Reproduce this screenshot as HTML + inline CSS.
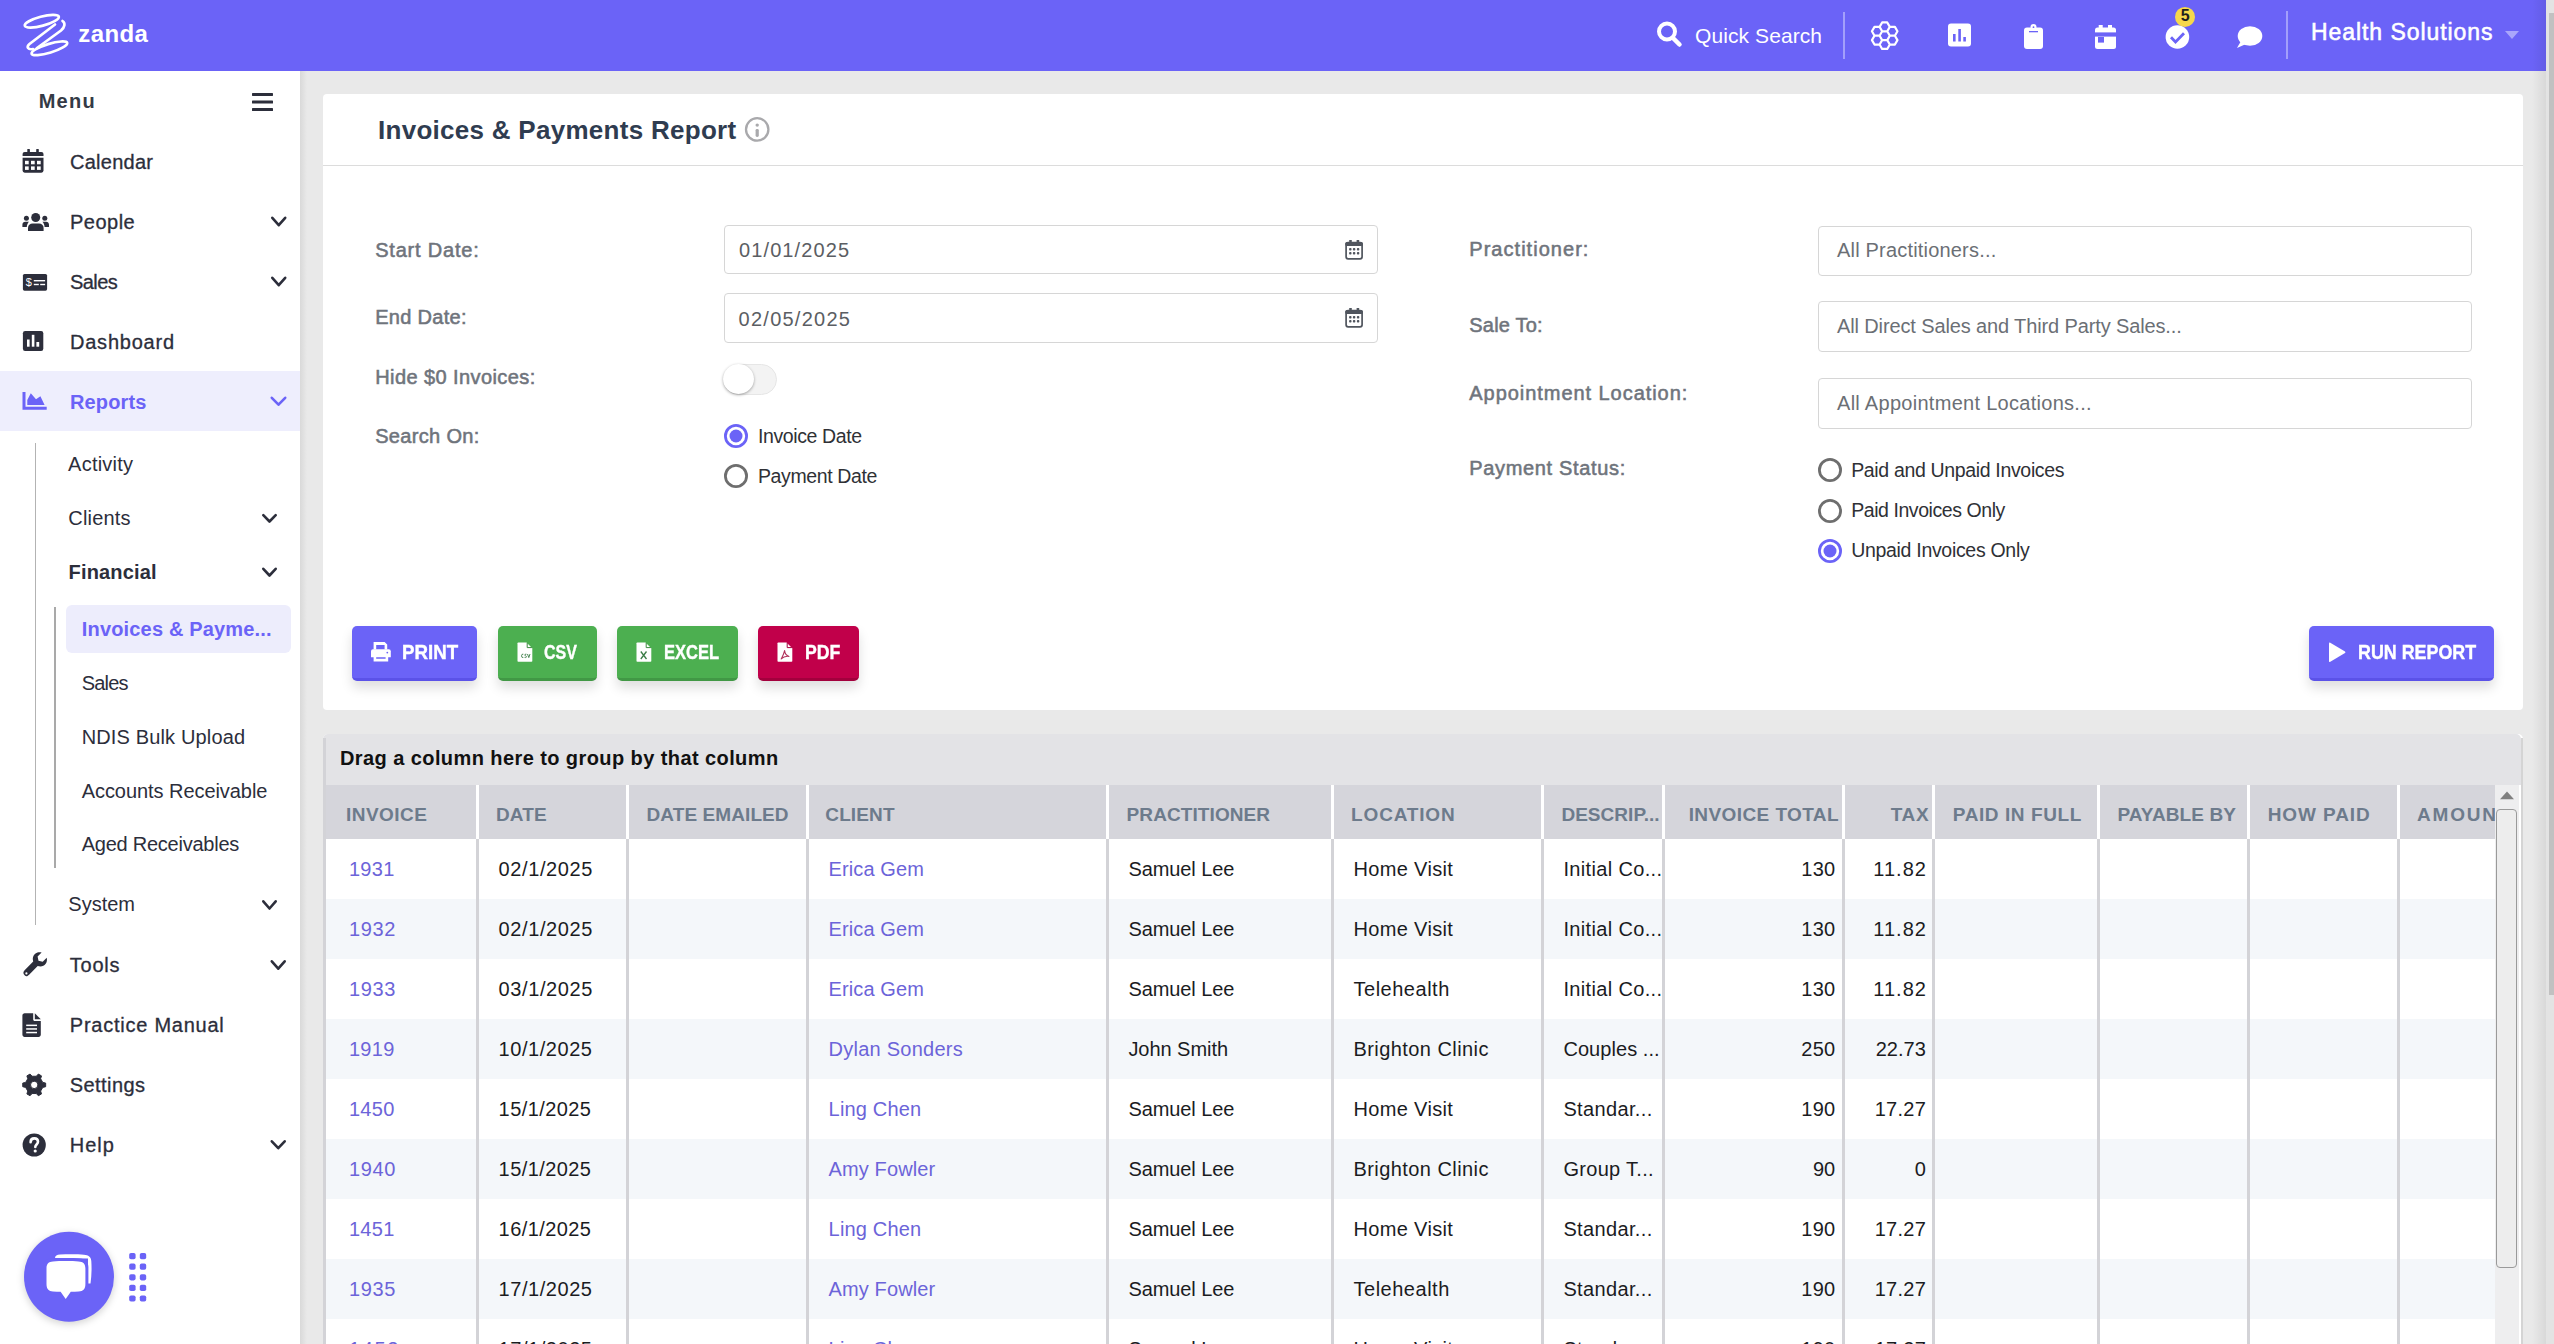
<!DOCTYPE html>
<html><head><meta charset="utf-8">
<style>

*{box-sizing:border-box;margin:0;padding:0}
html,body{width:2554px;height:1344px;overflow:hidden;background:#e9e9e9;font-family:"Liberation Sans",sans-serif}
.abs{position:absolute}
.t{position:absolute;white-space:nowrap;line-height:1}
#top{position:absolute;left:0;top:0;width:2546px;height:71px;background:#6b63f7}
#psb{position:absolute;left:2546px;top:0;width:8px;height:1344px;background:#e3e3e3}
#psb .th{position:absolute;left:3px;top:13px;width:5px;height:982px;background:#c1c1c1}
#side{position:absolute;left:0;top:71px;width:300px;height:1273px;background:#fff}
#sideshadow{position:absolute;left:300px;top:71px;width:7px;height:1273px;background:linear-gradient(to right,#d9d9d9,#e9e9e9)}
.si{font-size:20px;color:#2c2e3b}
.card{position:absolute;background:#fff;border-radius:4px}
.lbl{font-size:20px;color:#6f747c;font-weight:bold}
.inp{position:absolute;border:1px solid #d6d6d6;border-radius:4px;background:#fff}
.itx{font-size:20px;color:#5b5e63}
.rtx{font-size:19px;color:#34363b}
.radio{position:absolute;width:24px;height:24px;border-radius:50%;border:2.5px solid #6e6e6e;background:#fff}
.radio.on{border:2.5px solid #6b63f7}
.radio.on:after{content:"";position:absolute;left:4px;top:4px;width:11px;height:11px;border-radius:50%;background:#6b63f7}
.btn{position:absolute;height:55px;border-radius:5px;box-shadow:0 6px 10px rgba(0,0,0,.13)}
.btxt{font-size:20px;color:#fff;font-weight:bold}
.hd{font-size:19px;color:#6d7a8a;font-weight:bold}
.cell{font-size:20px;color:#1e1f22}
.lnk{font-size:20px;color:#6c64d9}
.sw{font-weight:normal !important;-webkit-text-stroke:0.55px currentColor}
.sw3{font-weight:normal !important;-webkit-text-stroke:0.3px currentColor}
.bt{-webkit-text-stroke:0.4px #fff}

</style></head><body>
<div id="top"></div>
<div id="psb"><div class="th"></div></div>
<!-- TOPBAR -->
<svg class="abs" style="left:0;top:0" width="2546" height="71" viewBox="0 0 2546 71">
 <g fill="none" stroke="#fff" stroke-width="2.7" stroke-linecap="round">
  <ellipse cx="41.8" cy="21.2" rx="17.6" ry="4.6" transform="rotate(-15 41.8 21.2)"/>
  <path d="M55 24.5 L29.5 44 C26 47 28 50 33 49 M62.5 21 C65.5 23 65 27 61 30.5 L37 48"/>
  <ellipse cx="49.4" cy="48.3" rx="18.6" ry="4.4" transform="rotate(-17 49.4 48.3)"/>
 </g>
 <!-- search -->
 <g fill="none" stroke="#fff">
  <circle cx="1667" cy="31.5" r="8" stroke-width="4"/>
  <path d="M1673 38 L1679.5 44.5" stroke-width="4.5" stroke-linecap="round"/>
 </g>
 <rect x="1843" y="12" width="2" height="47" fill="#a39ffb"/>
 <rect x="2286" y="11" width="2" height="48" fill="#a39ffb"/>
 <!-- honeycomb -->
 <g fill="none" stroke="#fff" stroke-width="2.2" id="hc"><path d="M1889.80 35.70 L1887.25 40.12 L1882.15 40.12 L1879.60 35.70 L1882.15 31.28 L1887.25 31.28Z M1897.45 31.28 L1894.90 35.70 L1889.80 35.70 L1887.25 31.28 L1889.80 26.87 L1894.90 26.87Z M1889.80 26.87 L1887.25 31.28 L1882.15 31.28 L1879.60 26.87 L1882.15 22.45 L1887.25 22.45Z M1882.15 31.28 L1879.60 35.70 L1874.50 35.70 L1871.95 31.28 L1874.50 26.87 L1879.60 26.87Z M1882.15 40.12 L1879.60 44.53 L1874.50 44.53 L1871.95 40.12 L1874.50 35.70 L1879.60 35.70Z M1889.80 44.53 L1887.25 48.95 L1882.15 48.95 L1879.60 44.53 L1882.15 40.12 L1887.25 40.12Z M1897.45 40.12 L1894.90 44.53 L1889.80 44.53 L1887.25 40.12 L1889.80 35.70 L1894.90 35.70Z" stroke-linejoin="round"/></g>
 <!-- chart -->
 <rect x="1948" y="23.5" width="23" height="23" rx="3" fill="#fff"/>
 <rect x="1953" y="34" width="2.6" height="7.5" fill="#6b63f7"/>
 <rect x="1958.3" y="29" width="2.6" height="12.5" fill="#6b63f7"/>
 <rect x="1963.3" y="37" width="2.6" height="4.5" fill="#6b63f7"/>
 <!-- clipboard -->
 <rect x="2024" y="27.5" width="19" height="21.5" rx="3" fill="#fff"/>
 <circle cx="2033.5" cy="27" r="3" fill="#fff"/>
 <rect x="2029" y="31" width="9" height="1.3" fill="#6b63f7"/>
 <circle cx="2033.5" cy="27.2" r="0.9" fill="#6b63f7"/>
 <!-- calendar -->
 <rect x="2095" y="27.5" width="21" height="21.5" rx="2.5" fill="#fff"/>
 <rect x="2095" y="32.4" width="21" height="4.2" fill="#6b63f7"/>
 <rect x="2098.7" y="25" width="4" height="4" fill="#fff"/>
 <rect x="2108" y="25" width="4" height="4" fill="#fff"/>
 <rect x="2098" y="37" width="6" height="5.6" fill="#6b63f7"/>
 <!-- check -->
 <circle cx="2177.4" cy="37" r="11.8" fill="#fff"/>
 <path d="M2171 37.3 L2175.5 42 L2184 33.2" fill="none" stroke="#6b63f7" stroke-width="2.8"/>
 <circle cx="2185" cy="16.9" r="10" fill="#f6d84c"/>
 <!-- chat -->
 <ellipse cx="2250" cy="36" rx="12.3" ry="9.8" fill="#fff"/>
 <path d="M2241 41 L2237 48 L2246 44 Z" fill="#fff"/>
 <!-- caret -->
 <path d="M2505 31 L2519 31 L2512 39 Z" fill="#aaa6fb"/>
</svg>
<div id="tx1" class="t " style="left:78.3px;top:22.18px;font-size:24px;letter-spacing:0.375px;font-weight:bold;color:#fff">zanda</div>
<div id="tx2" class="t " style="left:1695px;top:25.02px;font-size:21px;letter-spacing:0.091px;color:#fff">Quick Search</div>
<div class="t" style="left:2180.7px;top:8.4px;font-size:16px;font-weight:bold;color:#1e1e1e">5</div>
<div id="tx3" class="t sw" style="left:2311px;top:21.33px;font-size:23px;letter-spacing:0.933px;color:#fff">Health Solutions</div>
<div id="side"></div>
<div id="sideshadow"></div>
<div class="abs" style="left:0;top:371px;width:300px;height:60px;background:#eeeefd"></div>
<div class="abs" style="left:66px;top:605px;width:225px;height:48px;background:#ededfc;border-radius:6px"></div>
<div class="abs" style="left:34.8px;top:443px;width:1.5px;height:482px;background:#b3b3b3"></div>
<div class="abs" style="left:54.1px;top:607px;width:2px;height:261px;background:#a9a9a9"></div>
<svg class="abs" style="left:0;top:0" width="300" height="1344" viewBox="0 0 300 1344">
<rect x="252" y="92.9" width="21" height="3" rx="0.6" fill="#2c2e3b"/>
<rect x="252" y="100.5" width="21" height="3" rx="0.6" fill="#2c2e3b"/>
<rect x="252" y="108.0" width="21" height="3" rx="0.6" fill="#2c2e3b"/>
<rect x="27.3" y="149" width="2.6" height="4" rx="0.6" fill="#2c2e3b"/><rect x="36.2" y="149" width="2.6" height="4" rx="0.6" fill="#2c2e3b"/>
<path d="M22.6 154 Q22.6 151.9 24.7 151.9 L41.4 151.9 Q43.5 151.9 43.5 154 L43.5 156 L22.6 156 Z" fill="#2c2e3b"/>
<path d="M22.6 157.8 L43.5 157.8 L43.5 170.6 Q43.5 172.7 41.4 172.7 L24.7 172.7 Q22.6 172.7 22.6 170.6 Z" fill="#2c2e3b"/>
<rect x="25" y="160.8" width="3.7" height="3.5" fill="#fff"/>
<rect x="31" y="160.8" width="3.7" height="3.5" fill="#fff"/>
<rect x="37" y="160.8" width="3.7" height="3.5" fill="#fff"/>
<rect x="25" y="166.4" width="3.7" height="3.5" fill="#fff"/>
<rect x="31" y="166.4" width="3.7" height="3.5" fill="#fff"/>
<rect x="37" y="166.4" width="3.7" height="3.5" fill="#fff"/>
<circle cx="35.7" cy="217.5" r="4.5" fill="#2c2e3b"/>
<path d="M28 231 L28 228 C28 225.2 30 223.6 32.6 223.6 L39 223.6 C41.6 223.6 43.6 225.2 43.6 228 L43.6 231 Z" fill="#2c2e3b"/>
<circle cx="26.4" cy="218.2" r="2.5" fill="#2c2e3b"/><circle cx="44.8" cy="218.2" r="2.5" fill="#2c2e3b"/>
<path d="M22.4 227 L22.4 224.8 C22.4 222.8 23.6 221.8 25.3 221.8 L29 221.8 C27.6 223.2 26.9 225 26.8 227 Z" fill="#2c2e3b"/>
<path d="M49 227 L49 224.8 C49 222.8 47.8 221.8 46.1 221.8 L42.4 221.8 C43.8 223.2 44.5 225 44.6 227 Z" fill="#2c2e3b"/>
<rect x="22.9" y="274" width="24.2" height="16.7" rx="1.6" fill="#2c2e3b"/>
<text x="28.8" y="286.3" font-family="Liberation Sans" font-size="11" fill="#fff" text-anchor="middle">$</text>
<rect x="33.8" y="280" width="11.3" height="1.4" fill="#fff"/><rect x="33.8" y="283.8" width="5" height="1.4" fill="#fff"/><rect x="40.2" y="283.8" width="4.9" height="1.4" fill="#fff"/>
<rect x="22.9" y="331" width="20.4" height="20" rx="2.2" fill="#2c2e3b"/>
<rect x="27" y="339.5" width="2.6" height="7.2" fill="#fff"/><rect x="31.8" y="334.8" width="2.6" height="11.9" fill="#fff"/><rect x="36.4" y="342" width="2.8" height="4.7" fill="#fff"/>
<path d="M22.5 392 L25.5 392 L25.5 406.8 L46.7 406.8 L46.7 409.8 L22.5 409.8 Z" fill="#6b63f7"/>
<path d="M27.3 405 L27.3 400 L30.8 393.3 L36 399.3 L40.4 396.2 L44.6 405 Z" fill="#6b63f7"/>
<path d="M24.6 975.2 C23 973.6 23 971.8 24.6 970.2 L33.2 961.6 C32.2 958.2 33 955.5 35.5 953.6 C37.2 952.4 39.6 952 41.6 952.6 L37.6 956.6 L38.5 960.8 L42.7 961.7 L46.7 957.7 C47.3 959.7 46.9 962.1 45.7 963.8 C43.8 966.3 41.1 967.1 37.7 966.1 L29.1 974.7 C27.5 976.3 26.2 976.8 24.6 975.2 Z" fill="#2c2e3b"/>
<circle cx="26.4" cy="973.4" r="1.1" fill="#fff"/>
<path d="M22.4 1015.4 C22.4 1014.2 23.4 1013.2 24.6 1013.2 L33.2 1013.2 L33.2 1019.5 C33.2 1020.3 33.9 1021 34.7 1021 L40.8 1021 L40.8 1034.7 C40.8 1035.9 39.8 1036.9 38.6 1036.9 L24.6 1036.9 C23.4 1036.9 22.4 1035.9 22.4 1034.7 Z" fill="#2c2e3b"/>
<path d="M34.8 1013.2 L40.8 1019.3 L34.8 1019.3 Z" fill="#2c2e3b"/>
<rect x="26.2" y="1024.6" width="10.8" height="1.5" fill="#fff"/><rect x="26.2" y="1028.2" width="10.8" height="1.5" fill="#fff"/><rect x="26.2" y="1031.8" width="10.8" height="1.5" fill="#fff"/>
<path d="M42.75 1082.42 L45.66 1083.09 L45.66 1086.71 L42.75 1087.38 L40.62 1091.06 L41.50 1093.91 L38.36 1095.73 L36.32 1093.54 L32.08 1093.54 L30.04 1095.73 L26.90 1093.91 L27.78 1091.06 L25.65 1087.38 L22.74 1086.71 L22.74 1083.09 L25.65 1082.42 L27.78 1078.74 L26.90 1075.89 L30.04 1074.07 L32.08 1076.26 L36.32 1076.26 L38.36 1074.07 L41.50 1075.89 L40.62 1078.74Z M37.90 1084.90 A3.7 3.7 0 1 0 30.50 1084.90 A3.7 3.7 0 1 0 37.90 1084.90Z" fill="#2c2e3b" fill-rule="evenodd" stroke="#2c2e3b" stroke-width="1" stroke-linejoin="round"/>
<circle cx="34.2" cy="1145" r="11.6" fill="#2c2e3b"/>
<path d="M30.6 1142.2 C30.6 1139.8 32.2 1138.4 34.3 1138.4 C36.5 1138.4 38 1139.8 38 1141.8 C38 1144.4 35.3 1144.6 35.3 1147" fill="none" stroke="#fff" stroke-width="2.6" stroke-linecap="round"/>
<circle cx="35.2" cy="1151" r="1.6" fill="#fff"/>
<path d="M272.30 217.80 L278.75 225.20 L285.20 217.80" fill="none" stroke="#2c2e3b" stroke-width="2.6" stroke-linecap="round" stroke-linejoin="round"/>
<path d="M272.30 277.80 L278.75 285.20 L285.20 277.80" fill="none" stroke="#2c2e3b" stroke-width="2.6" stroke-linecap="round" stroke-linejoin="round"/>
<path d="M271.80 397.80 L278.50 404.70 L285.20 397.80" fill="none" stroke="#6b63f7" stroke-width="2.6" stroke-linecap="round" stroke-linejoin="round"/>
<path d="M263.30 515.10 L269.50 521.50 L275.70 515.10" fill="none" stroke="#2c2e3b" stroke-width="2.6" stroke-linecap="round" stroke-linejoin="round"/>
<path d="M263.30 568.80 L269.50 575.50 L275.70 568.80" fill="none" stroke="#2c2e3b" stroke-width="2.6" stroke-linecap="round" stroke-linejoin="round"/>
<path d="M263.30 901.30 L269.50 908.50 L275.70 901.30" fill="none" stroke="#2c2e3b" stroke-width="2.6" stroke-linecap="round" stroke-linejoin="round"/>
<path d="M271.80 961.30 L278.25 968.70 L284.70 961.30" fill="none" stroke="#2c2e3b" stroke-width="2.6" stroke-linecap="round" stroke-linejoin="round"/>
<path d="M271.80 1141.30 L278.25 1148.20 L284.70 1141.30" fill="none" stroke="#2c2e3b" stroke-width="2.6" stroke-linecap="round" stroke-linejoin="round"/>
<defs><filter id="shb" x="-30%" y="-30%" width="160%" height="160%"><feGaussianBlur stdDeviation="3.5"/></filter></defs>
<circle cx="69" cy="1279" r="45.5" fill="rgba(0,0,0,0.16)" filter="url(#shb)"/>
<circle cx="69" cy="1276.8" r="45" fill="#6b63f7"/>
<path d="M55 1258 C55 1255.8 57 1254.6 60 1254.5 C69 1254.2 78 1254.2 84 1254.8 C88.5 1255.2 91 1257 91.3 1261 C91.8 1268 91.6 1276 90.5 1283.5 L88 1283.5 L88 1258.5 Z" fill="#fff"/>
<path d="M43.6 1267 C43.6 1261.5 46 1258.6 51 1258.3 C60 1257.8 72 1257.8 80 1258.4 C85.5 1258.8 88.4 1261.5 88.4 1267 L88.4 1285 C88.4 1291.5 85 1294.4 79 1294.6 C70 1295 58 1295 50 1294.6 C45.5 1294.3 43.6 1291 43.6 1285 Z" fill="#6b63f7"/>
<path d="M46.5 1268.5 C46.5 1263.5 48.6 1261.6 53 1261.4 C60 1261 72 1261 78.5 1261.4 C83.2 1261.7 85.4 1263.6 85.4 1268.5 L85.4 1284 C85.4 1289 83.4 1291.3 78.6 1291.5 C76 1291.6 73.5 1291.7 70.8 1291.7 L65.7 1299 L60.6 1291.7 C58 1291.7 55.8 1291.6 53 1291.5 C48.6 1291.3 46.5 1289 46.5 1284 Z" fill="#fff"/>
<rect x="129.2" y="1253.0" width="6.4" height="6.2" rx="1.8" fill="#6b63f7"/>
<rect x="139.8" y="1253.0" width="6.4" height="6.2" rx="1.8" fill="#6b63f7"/>
<rect x="129.2" y="1263.6" width="6.4" height="6.2" rx="1.8" fill="#6b63f7"/>
<rect x="139.8" y="1263.6" width="6.4" height="6.2" rx="1.8" fill="#6b63f7"/>
<rect x="129.2" y="1274.2" width="6.4" height="6.2" rx="1.8" fill="#6b63f7"/>
<rect x="139.8" y="1274.2" width="6.4" height="6.2" rx="1.8" fill="#6b63f7"/>
<rect x="129.2" y="1284.8" width="6.4" height="6.2" rx="1.8" fill="#6b63f7"/>
<rect x="139.8" y="1284.8" width="6.4" height="6.2" rx="1.8" fill="#6b63f7"/>
<rect x="129.2" y="1295.4" width="6.4" height="6.2" rx="1.8" fill="#6b63f7"/>
<rect x="139.8" y="1295.4" width="6.4" height="6.2" rx="1.8" fill="#6b63f7"/>
</svg>
<div id="tx4" class="t " style="left:38.7px;top:91.27px;font-size:20px;letter-spacing:1.266px;font-weight:bold;color:#343a46">Menu</div>
<div id="tx5" class="t sw3" style="left:70px;top:151.77px;font-size:20px;letter-spacing:0.257px;color:#2c2e3b;">Calendar</div>
<div id="tx6" class="t sw3" style="left:70px;top:211.87px;font-size:20px;letter-spacing:0.480px;color:#2c2e3b;">People</div>
<div id="tx7" class="t sw3" style="left:70px;top:271.87px;font-size:20px;letter-spacing:-0.550px;color:#2c2e3b;">Sales</div>
<div id="tx8" class="t sw3" style="left:70px;top:331.77px;font-size:20px;letter-spacing:0.775px;color:#2c2e3b;">Dashboard</div>
<div id="tx9" class="t " style="left:70px;top:391.87px;font-size:20px;letter-spacing:0.134px;color:#6b63f7;font-weight:bold">Reports</div>
<div id="tx10" class="t " style="left:68.1px;top:454.27px;font-size:20px;letter-spacing:0.228px;color:#2c2e3b;">Activity</div>
<div id="tx11" class="t " style="left:68.3px;top:507.87px;font-size:20px;letter-spacing:0.167px;color:#2c2e3b;">Clients</div>
<div id="tx12" class="t " style="left:68.6px;top:561.77px;font-size:20px;letter-spacing:0.150px;color:#2c2e3b;font-weight:bold">Financial</div>
<div id="tx13" class="t " style="left:81.8px;top:618.77px;font-size:20px;letter-spacing:0.167px;color:#6b63f7;font-weight:bold">Invoices &amp; Payme...</div>
<div id="tx14" class="t " style="left:81.7px;top:672.77px;font-size:20px;letter-spacing:-0.800px;color:#2c2e3b;">Sales</div>
<div id="tx15" class="t " style="left:81.7px;top:727.07px;font-size:20px;letter-spacing:0.147px;color:#2c2e3b;">NDIS Bulk Upload</div>
<div id="tx16" class="t " style="left:81.7px;top:780.87px;font-size:20px;letter-spacing:-0.056px;color:#2c2e3b;">Accounts Receivable</div>
<div id="tx17" class="t " style="left:81.7px;top:834.47px;font-size:20px;letter-spacing:-0.240px;color:#2c2e3b;">Aged Receivables</div>
<div id="tx18" class="t " style="left:68.3px;top:894.47px;font-size:20px;letter-spacing:0.000px;color:#2c2e3b;">System</div>
<div id="tx19" class="t sw3" style="left:69.8px;top:955.47px;font-size:20px;letter-spacing:0.750px;color:#2c2e3b;">Tools</div>
<div id="tx20" class="t sw3" style="left:69.8px;top:1015.07px;font-size:20px;letter-spacing:0.757px;color:#2c2e3b;">Practice Manual</div>
<div id="tx21" class="t sw3" style="left:69.8px;top:1075.07px;font-size:20px;letter-spacing:0.429px;color:#2c2e3b;">Settings</div>
<div id="tx22" class="t sw3" style="left:69.8px;top:1135.07px;font-size:20px;letter-spacing:1.000px;color:#2c2e3b;">Help</div>
<div class="card" style="left:323px;top:94px;width:2200px;height:616px"></div>
<div class="abs" style="left:323px;top:164.5px;width:2200px;height:1.5px;background:#dcdcdc"></div>
<div id="tx23" class="t " style="left:378px;top:116.99px;font-size:26px;letter-spacing:0.280px;font-weight:bold;color:#2f3c50">Invoices &amp; Payments Report</div>
<svg class="abs" style="left:744px;top:117px" width="27" height="27" viewBox="0 0 27 27"><circle cx="13.2" cy="12.4" r="11.2" fill="none" stroke="#a9a9ac" stroke-width="2.3"/><circle cx="13.2" cy="8.1" r="1.7" fill="#a9a9ac"/><rect x="11.6" y="11.9" width="3.2" height="8" rx="1.4" fill="#a9a9ac"/></svg>
<div id="tx24" class="t sw" style="left:375.2px;top:239.67px;font-size:20px;letter-spacing:0.800px;color:#6f747c;">Start Date:</div>
<div id="tx25" class="t sw" style="left:375.2px;top:306.87px;font-size:20px;letter-spacing:0.300px;color:#6f747c;">End Date:</div>
<div id="tx26" class="t sw" style="left:375.2px;top:366.77px;font-size:20px;letter-spacing:0.412px;color:#6f747c;">Hide $0 Invoices:</div>
<div id="tx27" class="t sw" style="left:375.2px;top:425.67px;font-size:20px;letter-spacing:0.333px;color:#6f747c;">Search On:</div>
<div id="tx28" class="t sw" style="left:1469.3px;top:238.57px;font-size:20px;letter-spacing:1.033px;color:#6f747c;">Practitioner:</div>
<div id="tx29" class="t sw" style="left:1469.3px;top:314.57px;font-size:20px;letter-spacing:0.200px;color:#6f747c;">Sale To:</div>
<div id="tx30" class="t sw" style="left:1469.3px;top:382.87px;font-size:20px;letter-spacing:0.950px;color:#6f747c;">Appointment Location:</div>
<div id="tx31" class="t sw" style="left:1469.3px;top:458.07px;font-size:20px;letter-spacing:0.657px;color:#6f747c;">Payment Status:</div>
<div class="inp" style="left:724px;top:225px;width:654px;height:49px"></div>
<div class="inp" style="left:724px;top:293px;width:654px;height:50px"></div>
<div id="tx32" class="t " style="left:739px;top:240.07px;font-size:20px;letter-spacing:1.111px;color:#5b5e63">01/01/2025</div>
<div id="tx33" class="t " style="left:738.6px;top:309.07px;font-size:20px;letter-spacing:1.244px;color:#5b5e63">02/05/2025</div>
<svg class="abs" style="left:1345px;top:240px" width="19" height="21" viewBox="0 0 19 21"><rect x="1.1" y="2.7" width="16" height="16.1" rx="2" fill="none" stroke="#50555e" stroke-width="1.7"/><rect x="0.3" y="1.9" width="17.6" height="4" rx="1.5" fill="#50555e"/><rect x="4.2" y="-0.7" width="2.6" height="3.5" rx="1" fill="#50555e"/><rect x="11.6" y="-0.7" width="2.6" height="3.5" rx="1" fill="#50555e"/><rect x="4.1" y="8.1" width="2.4" height="2.4" rx="0.8" fill="#50555e"/><rect x="7.9" y="8.1" width="2.4" height="2.4" rx="0.8" fill="#50555e"/><rect x="11.9" y="8.1" width="2.4" height="2.4" rx="0.8" fill="#50555e"/><rect x="4.1" y="12.1" width="2.4" height="2.4" rx="0.8" fill="#50555e"/><rect x="7.9" y="12.1" width="2.4" height="2.4" rx="0.8" fill="#50555e"/><rect x="11.9" y="12.1" width="2.4" height="2.4" rx="0.8" fill="#50555e"/></svg>
<svg class="abs" style="left:1345px;top:308px" width="19" height="21" viewBox="0 0 19 21"><rect x="1.1" y="2.7" width="16" height="16.1" rx="2" fill="none" stroke="#50555e" stroke-width="1.7"/><rect x="0.3" y="1.9" width="17.6" height="4" rx="1.5" fill="#50555e"/><rect x="4.2" y="-0.7" width="2.6" height="3.5" rx="1" fill="#50555e"/><rect x="11.6" y="-0.7" width="2.6" height="3.5" rx="1" fill="#50555e"/><rect x="4.1" y="8.1" width="2.4" height="2.4" rx="0.8" fill="#50555e"/><rect x="7.9" y="8.1" width="2.4" height="2.4" rx="0.8" fill="#50555e"/><rect x="11.9" y="8.1" width="2.4" height="2.4" rx="0.8" fill="#50555e"/><rect x="4.1" y="12.1" width="2.4" height="2.4" rx="0.8" fill="#50555e"/><rect x="7.9" y="12.1" width="2.4" height="2.4" rx="0.8" fill="#50555e"/><rect x="11.9" y="12.1" width="2.4" height="2.4" rx="0.8" fill="#50555e"/></svg>
<div class="abs" style="left:723px;top:364px;width:54px;height:31px;border-radius:16px;background:#f3f3f3;border:1px solid #e6e6e6"></div>
<div class="abs" style="left:723px;top:364px;width:31px;height:30px;border-radius:50%;background:#fff;box-shadow:0 1px 3px rgba(0,0,0,.35)"></div>
<svg class="abs" style="left:722.8px;top:422.9px" width="26" height="26" viewBox="0 0 26 26"><circle cx="13" cy="13" r="10.6" fill="#fff" stroke="#6b63f7" stroke-width="2.8"/><circle cx="13" cy="13" r="6.5" fill="#6b63f7"/></svg>
<svg class="abs" style="left:722.8px;top:463.3px" width="26" height="26" viewBox="0 0 26 26"><circle cx="13" cy="13" r="10.6" fill="#fff" stroke="#6e6e6e" stroke-width="2.8"/></svg>
<div id="tx34" class="t " style="left:757.9px;top:427.19px;font-size:19.5px;letter-spacing:-0.382px;color:#2f3136">Invoice Date</div>
<div id="tx35" class="t " style="left:757.9px;top:466.89px;font-size:19.5px;letter-spacing:-0.364px;color:#2f3136">Payment Date</div>
<div class="inp" style="left:1818px;top:225.5px;width:654px;height:50px"></div>
<div id="tx36" class="t " style="left:1837px;top:239.77px;font-size:20px;letter-spacing:0.189px;color:#6b6f75">All Practitioners...</div>
<div class="inp" style="left:1818px;top:301px;width:654px;height:50.5px"></div>
<div id="tx37" class="t " style="left:1837px;top:315.57px;font-size:20px;letter-spacing:-0.125px;color:#6b6f75">All Direct Sales and Third Party Sales...</div>
<div class="inp" style="left:1818px;top:378px;width:654px;height:50.5px"></div>
<div id="tx38" class="t " style="left:1837px;top:393.07px;font-size:20px;letter-spacing:0.289px;color:#6b6f75">All Appointment Locations...</div>
<svg class="abs" style="left:1817px;top:457.3px" width="26" height="26" viewBox="0 0 26 26"><circle cx="13" cy="13" r="10.6" fill="#fff" stroke="#6e6e6e" stroke-width="2.8"/></svg>
<svg class="abs" style="left:1817px;top:498px" width="26" height="26" viewBox="0 0 26 26"><circle cx="13" cy="13" r="10.6" fill="#fff" stroke="#6e6e6e" stroke-width="2.8"/></svg>
<svg class="abs" style="left:1817px;top:538px" width="26" height="26" viewBox="0 0 26 26"><circle cx="13" cy="13" r="10.6" fill="#fff" stroke="#6b63f7" stroke-width="2.8"/><circle cx="13" cy="13" r="6.5" fill="#6b63f7"/></svg>
<div id="tx39" class="t " style="left:1851.2px;top:461.29px;font-size:19.5px;letter-spacing:-0.339px;color:#2f3136">Paid and Unpaid Invoices</div>
<div id="tx40" class="t " style="left:1851.2px;top:501.09px;font-size:19.5px;letter-spacing:-0.435px;color:#2f3136">Paid Invoices Only</div>
<div id="tx41" class="t " style="left:1851.2px;top:540.99px;font-size:19.5px;letter-spacing:-0.305px;color:#2f3136">Unpaid Invoices Only</div>
<div class="abs" style="left:352px;top:626px;width:125px;height:55px;border-radius:5px;background:#6b63f7;border-bottom:3.5px solid #5b52e8;box-shadow:0 7px 12px rgba(0,0,0,.13)"></div>
<svg class="abs" style="left:370px;top:641px" width="22" height="22" viewBox="0 0 22 22"><path fill-rule="evenodd" fill="#fff" d="M3.6 1 L14.6 1 L17.2 3.6 L17.2 8.5 L3.6 8.5 Z M6.2 4 L14.6 4 L14.6 8.5 L6.2 8.5 Z"/><path fill="#fff" d="M1 10.3 Q1 8.3 3 8.3 L18.8 8.3 Q20.8 8.3 20.8 10.3 L20.8 16.3 L1 16.3 Z"/><circle cx="17.3" cy="11.6" r="0.9" fill="#6b63f7"/><path fill-rule="evenodd" fill="#fff" d="M3.6 13.6 L18.2 13.6 L18.2 20.5 L3.6 20.5 Z M6.2 15 L15.6 15 L15.6 17.8 L6.2 17.8 Z"/></svg>
<div id="tx42" class="t bt" style="left:402px;top:642.27px;font-size:20px;transform:scaleX(0.9359);color:#fff;font-weight:bold;transform-origin:0 0">PRINT</div>
<div class="abs" style="left:498.2px;top:626px;width:98.6px;height:55px;border-radius:5px;background:#4caf50;border-bottom:3.5px solid #419845;box-shadow:0 7px 12px rgba(0,0,0,.13)"></div>
<svg class="abs" style="left:516.8px;top:642px" width="16" height="20" viewBox="0 0 16 20"><path d="M0.5 1.3 Q0.5 0.5 1.3 0.5 L9.5 0.5 L15.3 6.3 L15.3 18.9 Q15.3 19.7 14.5 19.7 L1.3 19.7 Q0.5 19.7 0.5 18.9 Z" fill="#fff"/><path d="M10.2 0.9 L10.2 5.6 L14.9 5.6" fill="none" stroke="#3b8a3f" stroke-width="1"/><path d="M6.3 12.2 Q4.6 11.8 4.5 13.8 Q4.5 15.9 6.3 15.5 M9.4 12.2 Q7.6 11.9 7.8 13.2 Q8 13.8 8.8 14 Q9.8 14.4 9.3 15.2 Q8.7 15.8 7.6 15.4 M10.5 12 L11.8 15.6 L13 12" fill="none" stroke="#3b7d47" stroke-width="0.9"/></svg>
<div id="tx43" class="t bt" style="left:543.9px;top:642.27px;font-size:20px;transform:scaleX(0.8008);color:#fff;font-weight:bold;transform-origin:0 0">CSV</div>
<div class="abs" style="left:617.2px;top:626px;width:120.6px;height:55px;border-radius:5px;background:#4caf50;border-bottom:3.5px solid #419845;box-shadow:0 7px 12px rgba(0,0,0,.13)"></div>
<svg class="abs" style="left:636.4px;top:642px" width="16" height="20" viewBox="0 0 16 20"><path d="M0.5 1.3 Q0.5 0.5 1.3 0.5 L9.5 0.5 L15.3 6.3 L15.3 18.9 Q15.3 19.7 14.5 19.7 L1.3 19.7 Q0.5 19.7 0.5 18.9 Z" fill="#fff"/><path d="M10.2 0.9 L10.2 5.6 L14.9 5.6" fill="none" stroke="#3b8a3f" stroke-width="1"/><path d="M4.8 9.5 L10.5 17 M10.5 9.5 L4.8 17" stroke="#3b7d47" stroke-width="1.3"/></svg>
<div id="tx44" class="t bt" style="left:663.8px;top:642.27px;font-size:20px;transform:scaleX(0.8249);color:#fff;font-weight:bold;transform-origin:0 0">EXCEL</div>
<div class="abs" style="left:758.3px;top:626px;width:100.5px;height:55px;border-radius:5px;background:#c1004a;border-bottom:3.5px solid #a3003d;box-shadow:0 7px 12px rgba(0,0,0,.13)"></div>
<svg class="abs" style="left:776.7px;top:642px" width="16" height="20" viewBox="0 0 16 20"><path d="M0.5 1.3 Q0.5 0.5 1.3 0.5 L9.5 0.5 L15.3 6.3 L15.3 18.9 Q15.3 19.7 14.5 19.7 L1.3 19.7 Q0.5 19.7 0.5 18.9 Z" fill="#fff"/><path d="M10.2 0.9 L10.2 5.6 L14.9 5.6" fill="none" stroke="#a3003d" stroke-width="1"/><path d="M7.6 8.6 C7.9 11.5 9.5 13.6 12 14.4 C9.2 14 6.2 14.8 4.2 17 C5.5 14.5 7 11.8 7.6 8.6 Z" fill="none" stroke="#b0305a" stroke-width="1.1" stroke-linejoin="round"/></svg>
<div id="tx45" class="t bt" style="left:804.7px;top:642.27px;font-size:20px;transform:scaleX(0.8826);color:#fff;font-weight:bold;transform-origin:0 0">PDF</div>
<div class="abs" style="left:2309.3px;top:626px;width:184.3px;height:55px;border-radius:5px;background:#6b63f7;border-bottom:3.5px solid #5b52e8;box-shadow:0 7px 12px rgba(0,0,0,.13)"></div>
<svg class="abs" style="left:2327px;top:641px" width="20" height="24" viewBox="0 0 20 24"><path d="M2 2.5 Q2 1 3.3 1.7 L18 10.5 Q19 11.3 18 12 L3.3 20.8 Q2 21.5 2 20 Z" fill="#fff"/></svg>
<div id="tx46" class="t bt" style="left:2357.6px;top:642.27px;font-size:20px;transform:scaleX(0.8931);color:#fff;font-weight:bold;transform-origin:0 0">RUN REPORT</div>
<div class="abs" style="left:323px;top:734px;width:2200px;height:620px;background:#fff;border-radius:5px 5px 0 0"></div>
<div class="abs" style="left:323px;top:734px;width:2198px;height:51px;background:#e3e3e6;border-radius:5px 5px 0 0"></div>
<div id="tx47" class="t " style="left:340px;top:747.77px;font-size:20px;letter-spacing:0.415px;font-weight:bold;color:#111">Drag a column here to group by that column</div>
<div class="abs" style="left:324.5px;top:785px;width:2170.5px;height:54px;background:#d5d5db"></div>
<div class="abs" style="left:326px;top:839px;width:2169px;height:60px;background:#ffffff"></div>
<div class="abs" style="left:326px;top:899px;width:2169px;height:60px;background:#f4f7fa"></div>
<div class="abs" style="left:326px;top:959px;width:2169px;height:60px;background:#ffffff"></div>
<div class="abs" style="left:326px;top:1019px;width:2169px;height:60px;background:#f4f7fa"></div>
<div class="abs" style="left:326px;top:1079px;width:2169px;height:60px;background:#ffffff"></div>
<div class="abs" style="left:326px;top:1139px;width:2169px;height:60px;background:#f4f7fa"></div>
<div class="abs" style="left:326px;top:1199px;width:2169px;height:60px;background:#ffffff"></div>
<div class="abs" style="left:326px;top:1259px;width:2169px;height:60px;background:#f4f7fa"></div>
<div class="abs" style="left:326px;top:1319px;width:2169px;height:60px;background:#ffffff"></div>
<div class="abs" style="left:323.3px;top:738px;width:2.6px;height:610px;background:#d3d3d7"></div>
<div class="abs" style="left:476.3px;top:785px;width:3px;height:54px;background:#fff"></div>
<div class="abs" style="left:476.3px;top:839px;width:3px;height:520px;background:#d3d3d7"></div>
<div class="abs" style="left:626.1px;top:785px;width:3px;height:54px;background:#fff"></div>
<div class="abs" style="left:626.1px;top:839px;width:3px;height:520px;background:#d3d3d7"></div>
<div class="abs" style="left:805.9px;top:785px;width:3px;height:54px;background:#fff"></div>
<div class="abs" style="left:805.9px;top:839px;width:3px;height:520px;background:#d3d3d7"></div>
<div class="abs" style="left:1106.2px;top:785px;width:3px;height:54px;background:#fff"></div>
<div class="abs" style="left:1106.2px;top:839px;width:3px;height:520px;background:#d3d3d7"></div>
<div class="abs" style="left:1331.2px;top:785px;width:3px;height:54px;background:#fff"></div>
<div class="abs" style="left:1331.2px;top:839px;width:3px;height:520px;background:#d3d3d7"></div>
<div class="abs" style="left:1541.3px;top:785px;width:3px;height:54px;background:#fff"></div>
<div class="abs" style="left:1541.3px;top:839px;width:3px;height:520px;background:#d3d3d7"></div>
<div class="abs" style="left:1662.1px;top:785px;width:3px;height:54px;background:#fff"></div>
<div class="abs" style="left:1662.1px;top:839px;width:3px;height:520px;background:#d3d3d7"></div>
<div class="abs" style="left:1842.2px;top:785px;width:3px;height:54px;background:#fff"></div>
<div class="abs" style="left:1842.2px;top:839px;width:3px;height:520px;background:#d3d3d7"></div>
<div class="abs" style="left:1931.8px;top:785px;width:3px;height:54px;background:#fff"></div>
<div class="abs" style="left:1931.8px;top:839px;width:3px;height:520px;background:#d3d3d7"></div>
<div class="abs" style="left:2097.0px;top:785px;width:3px;height:54px;background:#fff"></div>
<div class="abs" style="left:2097.0px;top:839px;width:3px;height:520px;background:#d3d3d7"></div>
<div class="abs" style="left:2247.2px;top:785px;width:3px;height:54px;background:#fff"></div>
<div class="abs" style="left:2247.2px;top:839px;width:3px;height:520px;background:#d3d3d7"></div>
<div class="abs" style="left:2397.3px;top:785px;width:3px;height:54px;background:#fff"></div>
<div class="abs" style="left:2397.3px;top:839px;width:3px;height:520px;background:#d3d3d7"></div>
<div id="tx48" class="t " style="left:346px;top:804.82px;font-size:19px;letter-spacing:0.467px;font-weight:bold;color:#6d7b8c">INVOICE</div>
<div id="tx49" class="t " style="left:496px;top:804.82px;font-size:19px;letter-spacing:0.133px;font-weight:bold;color:#6d7b8c">DATE</div>
<div id="tx50" class="t " style="left:646.5px;top:804.82px;font-size:19px;letter-spacing:0.091px;font-weight:bold;color:#6d7b8c">DATE EMAILED</div>
<div id="tx51" class="t " style="left:825.3px;top:804.82px;font-size:19px;letter-spacing:0.120px;font-weight:bold;color:#6d7b8c">CLIENT</div>
<div id="tx52" class="t " style="left:1126.6px;top:804.82px;font-size:19px;letter-spacing:0.091px;font-weight:bold;color:#6d7b8c">PRACTITIONER</div>
<div id="tx53" class="t " style="left:1351.1px;top:804.82px;font-size:19px;letter-spacing:0.829px;font-weight:bold;color:#6d7b8c">LOCATION</div>
<div id="tx54" class="t " style="left:1561.4px;top:804.82px;font-size:19px;letter-spacing:0.045px;font-weight:bold;color:#6d7b8c">DESCRIP...</div>
<div id="tx55" class="t " style="right:714.98px;top:804.82px;font-size:19px;letter-spacing:0.417px;font-weight:bold;color:#6d7b8c">INVOICE TOTAL</div>
<div id="tx56" class="t " style="right:624.80px;top:804.82px;font-size:19px;letter-spacing:0.600px;font-weight:bold;color:#6d7b8c">TAX</div>
<div id="tx57" class="t " style="left:1952.8px;top:804.82px;font-size:19px;letter-spacing:0.582px;font-weight:bold;color:#6d7b8c">PAID IN FULL</div>
<div id="tx58" class="t " style="left:2117.4px;top:804.82px;font-size:19px;letter-spacing:0.111px;font-weight:bold;color:#6d7b8c">PAYABLE BY</div>
<div id="tx59" class="t " style="left:2267.7px;top:804.82px;font-size:19px;letter-spacing:0.914px;font-weight:bold;color:#6d7b8c">HOW PAID</div>
<div class="abs" style="left:2400px;top:785px;width:94.8px;height:54px;overflow:hidden"><div id="tx60" class="t " style="left:17px;top:19.82px;font-size:19px;font-weight:bold;color:#6d7b8c;letter-spacing:1.8px">AMOUN</div>
</div>
<div id="tx61" class="t " style="left:348.9px;top:859.27px;font-size:20px;letter-spacing:0.333px;color:#6c64d9">1931</div>
<div id="tx62" class="t " style="left:498.6px;top:859.27px;font-size:20px;letter-spacing:0.600px;color:#1b1c1f">02/1/2025</div>
<div id="tx63" class="t " style="left:828.6px;top:859.27px;font-size:20px;letter-spacing:0.100px;color:#6c64d9">Erica Gem</div>
<div id="tx64" class="t " style="left:1128.4px;top:859.27px;font-size:20px;letter-spacing:-0.089px;color:#1b1c1f">Samuel Lee</div>
<div id="tx65" class="t " style="left:1353.5px;top:859.27px;font-size:20px;letter-spacing:0.333px;color:#1b1c1f">Home Visit</div>
<div id="tx66" class="t " style="left:1563.4px;top:859.27px;font-size:20px;letter-spacing:0.350px;color:#1b1c1f">Initial Co...</div>
<div id="tx67" class="t " style="right:718.50px;top:859.27px;font-size:20px;letter-spacing:0.300px;color:#1b1c1f">130</div>
<div id="tx68" class="t " style="right:627.10px;top:859.27px;font-size:20px;letter-spacing:1.000px;color:#1b1c1f">11.82</div>
<div id="tx69" class="t " style="left:348.9px;top:919.27px;font-size:20px;letter-spacing:0.667px;color:#6c64d9">1932</div>
<div id="tx70" class="t " style="left:498.6px;top:919.27px;font-size:20px;letter-spacing:0.600px;color:#1b1c1f">02/1/2025</div>
<div id="tx71" class="t " style="left:828.6px;top:919.27px;font-size:20px;letter-spacing:0.100px;color:#6c64d9">Erica Gem</div>
<div id="tx72" class="t " style="left:1128.4px;top:919.27px;font-size:20px;letter-spacing:-0.089px;color:#1b1c1f">Samuel Lee</div>
<div id="tx73" class="t " style="left:1353.5px;top:919.27px;font-size:20px;letter-spacing:0.333px;color:#1b1c1f">Home Visit</div>
<div id="tx74" class="t " style="left:1563.4px;top:919.27px;font-size:20px;letter-spacing:0.350px;color:#1b1c1f">Initial Co...</div>
<div id="tx75" class="t " style="right:718.50px;top:919.27px;font-size:20px;letter-spacing:0.300px;color:#1b1c1f">130</div>
<div id="tx76" class="t " style="right:627.10px;top:919.27px;font-size:20px;letter-spacing:1.000px;color:#1b1c1f">11.82</div>
<div id="tx77" class="t " style="left:348.9px;top:979.27px;font-size:20px;letter-spacing:0.667px;color:#6c64d9">1933</div>
<div id="tx78" class="t " style="left:498.6px;top:979.27px;font-size:20px;letter-spacing:0.600px;color:#1b1c1f">03/1/2025</div>
<div id="tx79" class="t " style="left:828.6px;top:979.27px;font-size:20px;letter-spacing:0.100px;color:#6c64d9">Erica Gem</div>
<div id="tx80" class="t " style="left:1128.4px;top:979.27px;font-size:20px;letter-spacing:-0.089px;color:#1b1c1f">Samuel Lee</div>
<div id="tx81" class="t " style="left:1353.5px;top:979.27px;font-size:20px;letter-spacing:0.511px;color:#1b1c1f">Telehealth</div>
<div id="tx82" class="t " style="left:1563.4px;top:979.27px;font-size:20px;letter-spacing:0.350px;color:#1b1c1f">Initial Co...</div>
<div id="tx83" class="t " style="right:718.50px;top:979.27px;font-size:20px;letter-spacing:0.300px;color:#1b1c1f">130</div>
<div id="tx84" class="t " style="right:627.10px;top:979.27px;font-size:20px;letter-spacing:1.000px;color:#1b1c1f">11.82</div>
<div id="tx85" class="t " style="left:348.9px;top:1039.27px;font-size:20px;letter-spacing:0.333px;color:#6c64d9">1919</div>
<div id="tx86" class="t " style="left:498.6px;top:1039.27px;font-size:20px;letter-spacing:0.550px;color:#1b1c1f">10/1/2025</div>
<div id="tx87" class="t " style="left:828.6px;top:1039.27px;font-size:20px;letter-spacing:0.250px;color:#6c64d9">Dylan Sonders</div>
<div id="tx88" class="t " style="left:1128.4px;top:1039.27px;font-size:20px;letter-spacing:-0.044px;color:#1b1c1f">John Smith</div>
<div id="tx89" class="t " style="left:1353.5px;top:1039.27px;font-size:20px;letter-spacing:0.429px;color:#1b1c1f">Brighton Clinic</div>
<div id="tx90" class="t " style="left:1563.4px;top:1039.27px;font-size:20px;letter-spacing:0.060px;color:#1b1c1f">Couples ...</div>
<div id="tx91" class="t " style="right:718.50px;top:1039.27px;font-size:20px;letter-spacing:0.300px;color:#1b1c1f">250</div>
<div id="tx92" class="t " style="right:628.05px;top:1039.27px;font-size:20px;letter-spacing:0.050px;color:#1b1c1f">22.73</div>
<div id="tx93" class="t " style="left:348.9px;top:1099.27px;font-size:20px;letter-spacing:0.333px;color:#6c64d9">1450</div>
<div id="tx94" class="t " style="left:498.6px;top:1099.27px;font-size:20px;letter-spacing:0.425px;color:#1b1c1f">15/1/2025</div>
<div id="tx95" class="t " style="left:828.6px;top:1099.27px;font-size:20px;letter-spacing:0.175px;color:#6c64d9">Ling Chen</div>
<div id="tx96" class="t " style="left:1128.4px;top:1099.27px;font-size:20px;letter-spacing:-0.089px;color:#1b1c1f">Samuel Lee</div>
<div id="tx97" class="t " style="left:1353.5px;top:1099.27px;font-size:20px;letter-spacing:0.333px;color:#1b1c1f">Home Visit</div>
<div id="tx98" class="t " style="left:1563.4px;top:1099.27px;font-size:20px;letter-spacing:0.356px;color:#1b1c1f">Standar...</div>
<div id="tx99" class="t " style="right:718.50px;top:1099.27px;font-size:20px;letter-spacing:0.300px;color:#1b1c1f">190</div>
<div id="tx100" class="t " style="right:627.80px;top:1099.27px;font-size:20px;letter-spacing:0.300px;color:#1b1c1f">17.27</div>
<div id="tx101" class="t " style="left:348.9px;top:1159.27px;font-size:20px;letter-spacing:0.667px;color:#6c64d9">1940</div>
<div id="tx102" class="t " style="left:498.6px;top:1159.27px;font-size:20px;letter-spacing:0.425px;color:#1b1c1f">15/1/2025</div>
<div id="tx103" class="t " style="left:828.6px;top:1159.27px;font-size:20px;letter-spacing:0.111px;color:#6c64d9">Amy Fowler</div>
<div id="tx104" class="t " style="left:1128.4px;top:1159.27px;font-size:20px;letter-spacing:-0.089px;color:#1b1c1f">Samuel Lee</div>
<div id="tx105" class="t " style="left:1353.5px;top:1159.27px;font-size:20px;letter-spacing:0.429px;color:#1b1c1f">Brighton Clinic</div>
<div id="tx106" class="t " style="left:1563.4px;top:1159.27px;font-size:20px;letter-spacing:0.311px;color:#1b1c1f">Group T...</div>
<div id="tx107" class="t " style="right:718.80px;top:1159.27px;font-size:20px;letter-spacing:0.000px;color:#1b1c1f">90</div>
<div id="tx108" class="t " style="right:628.10px;top:1159.27px;font-size:20px;letter-spacing:0.000px;color:#1b1c1f">0</div>
<div id="tx109" class="t " style="left:348.9px;top:1219.27px;font-size:20px;letter-spacing:0.333px;color:#6c64d9">1451</div>
<div id="tx110" class="t " style="left:498.6px;top:1219.27px;font-size:20px;letter-spacing:0.425px;color:#1b1c1f">16/1/2025</div>
<div id="tx111" class="t " style="left:828.6px;top:1219.27px;font-size:20px;letter-spacing:0.175px;color:#6c64d9">Ling Chen</div>
<div id="tx112" class="t " style="left:1128.4px;top:1219.27px;font-size:20px;letter-spacing:-0.089px;color:#1b1c1f">Samuel Lee</div>
<div id="tx113" class="t " style="left:1353.5px;top:1219.27px;font-size:20px;letter-spacing:0.333px;color:#1b1c1f">Home Visit</div>
<div id="tx114" class="t " style="left:1563.4px;top:1219.27px;font-size:20px;letter-spacing:0.356px;color:#1b1c1f">Standar...</div>
<div id="tx115" class="t " style="right:718.50px;top:1219.27px;font-size:20px;letter-spacing:0.300px;color:#1b1c1f">190</div>
<div id="tx116" class="t " style="right:627.80px;top:1219.27px;font-size:20px;letter-spacing:0.300px;color:#1b1c1f">17.27</div>
<div id="tx117" class="t " style="left:348.9px;top:1279.27px;font-size:20px;letter-spacing:0.667px;color:#6c64d9">1935</div>
<div id="tx118" class="t " style="left:498.6px;top:1279.27px;font-size:20px;letter-spacing:0.550px;color:#1b1c1f">17/1/2025</div>
<div id="tx119" class="t " style="left:828.6px;top:1279.27px;font-size:20px;letter-spacing:0.111px;color:#6c64d9">Amy Fowler</div>
<div id="tx120" class="t " style="left:1128.4px;top:1279.27px;font-size:20px;letter-spacing:-0.089px;color:#1b1c1f">Samuel Lee</div>
<div id="tx121" class="t " style="left:1353.5px;top:1279.27px;font-size:20px;letter-spacing:0.511px;color:#1b1c1f">Telehealth</div>
<div id="tx122" class="t " style="left:1563.4px;top:1279.27px;font-size:20px;letter-spacing:0.356px;color:#1b1c1f">Standar...</div>
<div id="tx123" class="t " style="right:718.50px;top:1279.27px;font-size:20px;letter-spacing:0.300px;color:#1b1c1f">190</div>
<div id="tx124" class="t " style="right:627.80px;top:1279.27px;font-size:20px;letter-spacing:0.300px;color:#1b1c1f">17.27</div>
<div id="tx125" class="t " style="left:348.9px;top:1339.27px;font-size:20px;letter-spacing:1.667px;color:#6c64d9">1452</div>
<div id="tx126" class="t " style="left:498.6px;top:1339.27px;font-size:20px;letter-spacing:0.550px;color:#1b1c1f">17/1/2025</div>
<div id="tx127" class="t " style="left:828.6px;top:1339.27px;font-size:20px;letter-spacing:0.175px;color:#6c64d9">Ling Chen</div>
<div id="tx128" class="t " style="left:1128.4px;top:1339.27px;font-size:20px;letter-spacing:-0.089px;color:#1b1c1f">Samuel Lee</div>
<div id="tx129" class="t " style="left:1353.5px;top:1339.27px;font-size:20px;letter-spacing:0.333px;color:#1b1c1f">Home Visit</div>
<div id="tx130" class="t " style="left:1563.4px;top:1339.27px;font-size:20px;letter-spacing:0.356px;color:#1b1c1f">Standar...</div>
<div id="tx131" class="t " style="right:718.50px;top:1339.27px;font-size:20px;letter-spacing:0.300px;color:#1b1c1f">190</div>
<div id="tx132" class="t " style="right:627.80px;top:1339.27px;font-size:20px;letter-spacing:0.300px;color:#1b1c1f">17.27</div>
<div class="abs" style="left:2494.8px;top:785px;width:24.5px;height:560px;background:#eeeeef"></div>
<svg class="abs" style="left:2499px;top:790px" width="16" height="10" viewBox="0 0 16 10"><path d="M1 9.2 L8 1.4 L15 9.2 Z" fill="#808080"/></svg>
<div class="abs" style="left:2496.2px;top:809px;width:20.6px;height:459px;background:#ededed;border:1.2px solid #9a9a9a;border-radius:4px"></div>
<div class="abs" style="left:2519.3px;top:785px;width:2px;height:560px;background:#fff"></div>
<div class="abs" style="left:2521px;top:738px;width:2.2px;height:620px;background:#d4d4d4"></div>
<div class="abs" style="left:2532px;top:0;width:14px;height:1344px;background:linear-gradient(to right,rgba(0,0,0,0),rgba(0,0,0,0.07))"></div>

</body></html>
